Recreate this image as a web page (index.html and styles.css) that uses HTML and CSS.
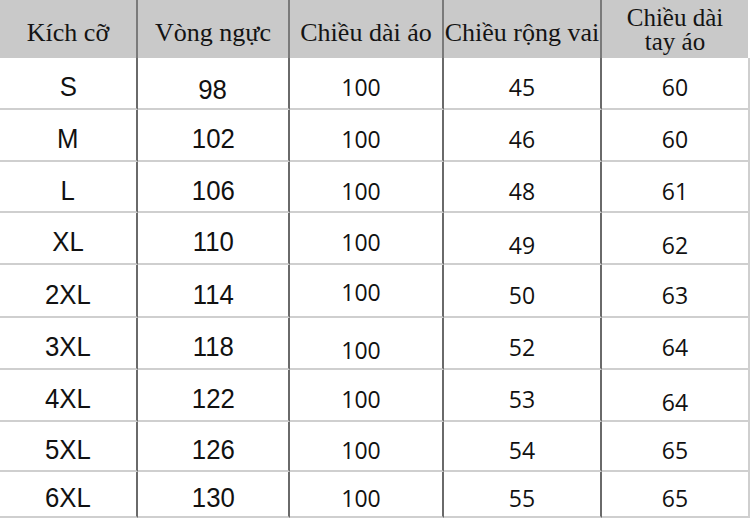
FILE: index.html
```html
<!DOCTYPE html>
<html lang="vi">
<head>
<meta charset="utf-8">
<title>Bảng kích cỡ</title>
<link rel="stylesheet" href="styles.css">
</head>
<body>
<div class="chart">
  <div class="hd">Kích cỡ</div>
  <div class="hd">Vòng ngực</div>
  <div class="hd">Chiều dài áo</div>
  <div class="hd">Chiều rộng vai</div>
  <div class="hd hd-last two"><span>Chiều dài</span><span>tay áo</span></div>

  <div class="c a"><span>S</span></div><div class="c a lo"><span>98</span></div><div class="c b sh">100</div><div class="c b">45</div><div class="c b e">60</div>
  <div class="c a"><span>M</span></div><div class="c a"><span>102</span></div><div class="c b sh">100</div><div class="c b">46</div><div class="c b e">60</div>
  <div class="c a"><span>L</span></div><div class="c a"><span>106</span></div><div class="c b sh">100</div><div class="c b">48</div><div class="c b e">61</div>
  <div class="c a"><span>XL</span></div><div class="c a"><span>110</span></div><div class="c b sh">100</div><div class="c b lo">49</div><div class="c b e lo">62</div>
  <div class="c a"><span>2XL</span></div><div class="c a"><span>114</span></div><div class="c b sh up">100</div><div class="c b">50</div><div class="c b e">63</div>
  <div class="c a"><span>3XL</span></div><div class="c a"><span>118</span></div><div class="c b sh lo">100</div><div class="c b">52</div><div class="c b e">64</div>
  <div class="c a"><span>4XL</span></div><div class="c a"><span>122</span></div><div class="c b sh">100</div><div class="c b">53</div><div class="c b e lo">64</div>
  <div class="c a"><span>5XL</span></div><div class="c a"><span>126</span></div><div class="c b sh">100</div><div class="c b">54</div><div class="c b e">65</div>
  <div class="c a"><span>6XL</span></div><div class="c a"><span>130</span></div><div class="c b sh">100</div><div class="c b">55</div><div class="c b e">65</div>
</div>
</body>
</html>
```
FILE: styles.css
```css
html, body {
  margin: 0;
  padding: 0;
  background: #ffffff;
}

.chart {
  display: grid;
  grid-template-columns: 138px 152px 154px 158px 148px;
  grid-template-rows: 58px 52px 52px 51px 52px 53px 52px 52px 50px 46px;
  width: 750px;
}

.hd {
  box-sizing: border-box;
  background: #c9c9c9;
  border-right: 2px solid #7a7a7a;
  display: flex;
  align-items: center;
  justify-content: center;
  padding-top: 7px;
  font-family: "Liberation Serif", "Times New Roman", serif;
  font-size: 26px;
  color: #141414;
  text-align: center;
  white-space: nowrap;
}

.hd-last {
  border-right: 2px solid #ffffff;
}

.two {
  flex-direction: column;
  font-size: 25px;
  line-height: 24px;
  padding-top: 2px;
}

.c {
  box-sizing: border-box;
  border-right: 2px solid #6a6a6a;
  border-bottom: 2px solid #cfcfcf;
  display: flex;
  align-items: center;
  justify-content: center;
  padding-top: 8px;
  color: #111111;
}

.a {
  font-family: "Liberation Sans", Arial, sans-serif;
  font-size: 28px;
}

.a span {
  display: inline-block;
  transform: scaleX(0.92);
}

.b {
  font-family: "Open Sans", "Noto Sans", sans-serif;
  font-size: 23px;
}

.sh {
  padding-right: 10px;
}

.e {
  border-right: 2px solid #cfcfcf;
}

.lo {
  padding-top: 14px;
}

.up {
  padding-top: 3px;
}
```
